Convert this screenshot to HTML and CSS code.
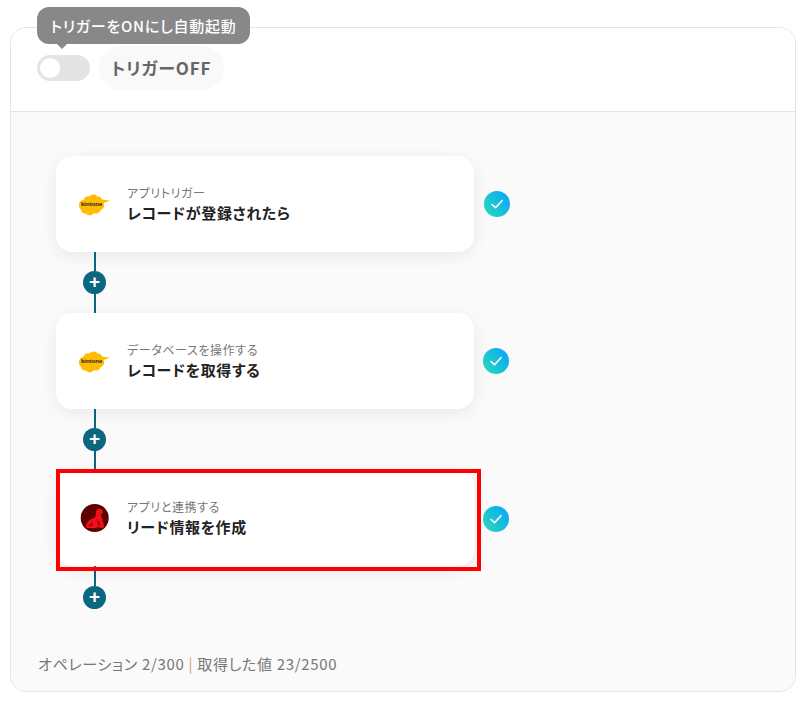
FILE: index.html
```html
<!DOCTYPE html>
<html lang="ja">
<head>
<meta charset="utf-8">
<title>フロー</title>
<link rel="stylesheet" href="styles.css">
</head>
<body>
<div class="tooltip">トリガーをONにし自動起動</div>
<main class="panel">
  <header class="panel-head">
    <span class="toggle"><span class="knob"></span></span>
    <span class="status">トリガーOFF</span>
  </header>
  <section class="panel-body">
    <div class="flow">
      <div class="step">
        <div class="card">
          <svg class="logo" viewBox="0 0 32 24" width="32" height="24">
            <path class="cloud" d="M1 13C1 10 3 8 5.500 8C6 5 9 3.500 11.500 4.500C13 2 17.500 1.500 19.500 4.500C21.500 4 24 5.500 24 7.500L32 8.700L25.500 11C27 14 25.500 17.500 22.500 18C22 21 18.500 22.500 16 21C14 24 9.500 24 8 21.500C5.500 22 3 20 3 17.500C1.500 16.500 1 15 1 13Z"/>
            <text class="logo-text" x="13.700" y="13.800">kintone</text>
          </svg>
          <div class="card-text">
            <div class="eyebrow">アプリトリガー</div>
            <div class="title">レコードが登録されたら</div>
          </div>
        </div>
        <svg class="check" viewBox="0 0 26 26" width="26" height="26">
          <defs><linearGradient id="g1" x1="0" y1="1" x2="1" y2="0.300"><stop offset="0" stop-color="#2bdcb4"/><stop offset="1" stop-color="#0aaaf5"/></linearGradient></defs>
          <circle cx="13" cy="13" r="13" fill="url(#g1)"/>
          <path class="tick" d="M8 13.500L11.500 16.700L18 9.700"/>
        </svg>
      </div>
      <div class="link"><span class="line"></span><span class="plus">+</span><span class="line"></span></div>

      <div class="step step-tight">
        <div class="card">
          <svg class="logo" viewBox="0 0 32 24" width="32" height="24">
            <path class="cloud" d="M1 13C1 10 3 8 5.500 8C6 5 9 3.500 11.500 4.500C13 2 17.500 1.500 19.500 4.500C21.500 4 24 5.500 24 7.500L32 8.700L25.500 11C27 14 25.500 17.500 22.500 18C22 21 18.500 22.500 16 21C14 24 9.500 24 8 21.500C5.500 22 3 20 3 17.500C1.500 16.500 1 15 1 13Z"/>
            <text class="logo-text" x="13.700" y="13.800">kintone</text>
          </svg>
          <div class="card-text">
            <div class="eyebrow">データベースを操作する</div>
            <div class="title">レコードを取得する</div>
          </div>
        </div>
        <svg class="check" viewBox="0 0 26 26" width="26" height="26">
          <circle cx="13" cy="13" r="13" fill="url(#g1)"/>
          <path class="tick" d="M8 13.500L11.500 16.700L18 9.700"/>
        </svg>
      </div>
      <div class="link"><span class="line"></span><span class="plus">+</span><span class="line"></span></div>

      <div class="step step-tight">
        <div class="card">
          <svg class="logo" viewBox="0 0 32 32" width="32" height="32">
            <circle cx="16.700" cy="16" r="14" fill="#5c0000"/>
            <path class="dog" d="M18.500 8L21 6.500L24 7.500L25 11L23 12L23.500 15C25 18 26 22 26 25.500L22 26L20 25L18 26L9 26C7.500 24.500 8 21.500 10 19.500C12 17 15 16.500 17 15.500C18 13 17.500 10 18.500 8Z"/>
            <path class="dog-shade" d="M19 17L22 21L21.500 24.500L20 23L19.500 20ZM10 24L15 20L14 24.500Z"/>
          </svg>
          <div class="card-text">
            <div class="eyebrow">アプリと連携する</div>
            <div class="title">リード情報を作成</div>
          </div>
        </div>
        <svg class="check check-low" viewBox="0 0 26 26" width="26" height="26">
          <circle cx="13" cy="13" r="13" fill="url(#g1)"/>
          <path class="tick" d="M8 13.500L11.500 16.700L18 9.700"/>
        </svg>
        <div class="highlight"></div>
      </div>
      <div class="link link-end"><span class="line"></span><span class="plus">+</span></div>
    </div>
    <footer class="usage">オペレーション 2/300 <span class="sep">|</span> 取得した値 23/2500</footer>
  </section>
</main>
</body>
</html>
```
FILE: styles.css
```css
* { box-sizing: border-box; }
html, body { margin: 0; background: #fff; }
body {
  position: relative;
  width: 805px;
  height: 701px;
  padding: 27px 9px 9px 10px;
  font-family: "Noto Sans CJK JP", "Noto Sans", sans-serif;
  font-feature-settings: "palt";
  overflow: hidden;
}
.panel {
  height: 665px;
  border: 1px solid #e4e4e4;
  border-radius: 16px;
  overflow: hidden;
  display: flex;
  flex-direction: column;
}
.panel-head {
  height: 84px;
  flex: none;
  border-bottom: 1px solid #e4e4e4;
  background: #fff;
  display: flex;
  align-items: flex-start;
  gap: 9px;
  padding: 18px 0 0 26px;
}
.toggle {
  width: 53px;
  height: 26px;
  margin-top: 9px;
  border-radius: 13px;
  background: #e4e4e4;
  padding: 3px;
}
.knob {
  display: block;
  width: 20px;
  height: 20px;
  border-radius: 50%;
  background: #fff;
}
.status {
  height: 44px;
  padding: 0 13px 0 12px;
  border-radius: 22px;
  background: #f9f9f9;
  color: #666;
  font-size: 17px;
  font-weight: 700;
  letter-spacing: .05em;
  line-height: 43px;
}
.tooltip {
  position: absolute;
  left: 37px;
  top: 7px;
  width: 213px;
  height: 37px;
  border-radius: 12px;
  background: #888;
  color: #fff;
  font-size: 15px;
  font-weight: 500;
  letter-spacing: .05em;
  line-height: 37px;
  text-align: center;
  z-index: 2;
}
.tooltip::after {
  content: "";
  position: absolute;
  left: 20px;
  top: 37px;
  border: 5px solid transparent;
  border-top-color: #888;
  border-bottom: 0;
}
.panel-body {
  flex: 1;
  background: #fafafa;
  padding: 44px 0 0 45px;
  display: flex;
  flex-direction: column;
}
.flow { display: flex; flex-direction: column; }
.step {
  position: relative;
  display: flex;
  align-items: center;
  gap: 10px;
}
.step-tight { gap: 9px; }
.card {
  width: 418px;
  height: 96px;
  border-radius: 16px;
  background: #fff;
  box-shadow: 0 4px 16px rgba(0, 0, 0, .07);
  display: flex;
  align-items: center;
  padding-left: 22px;
}
.logo { flex: none; }
.card-text {
  margin-left: 17px;
  margin-top: 1px;
}
.eyebrow {
  color: #777;
  font-size: 12px;
  letter-spacing: .05em;
  line-height: 17px;
}
.title {
  color: #222;
  font-size: 15px;
  font-weight: 700;
  letter-spacing: .04em;
  line-height: 24px;
}
.cloud { fill: #ffbc03; }
.logo-text {
  font-family: "Liberation Sans", sans-serif;
  font-size: 6px;
  font-weight: 700;
  fill: #222;
  text-anchor: middle;
}
.dog { fill: #f0101a; }
.dog-shade { fill: #9c0008; }
.check { flex: none; }
.check-low { margin-top: 1px; }
.tick {
  fill: none;
  stroke: #fff;
  stroke-width: 1.600;
  stroke-linecap: round;
  stroke-linejoin: round;
}
.highlight {
  position: absolute;
  left: 0;
  top: -1px;
  width: 425px;
  height: 102px;
  border: 4px solid #f00;
  pointer-events: none;
}
.link {
  width: 78px;
  height: 61px;
  display: flex;
  flex-direction: column;
  align-items: center;
  padding-right: 1px;
}
.link-end { height: 43px; }
.line {
  width: 2px;
  flex: 1;
  background: #0b667f;
}
.link-end .line { flex: none; height: 20px; }
.plus {
  flex: none;
  width: 23px;
  height: 23px;
  border-radius: 50%;
  background: #0b667f;
  color: #fff;
  font-family: "Liberation Sans", sans-serif;
  font-size: 19px;
  font-weight: 700;
  line-height: 22px;
  text-align: center;
}
.usage {
  margin-top: auto;
  margin-left: -18px;
  margin-bottom: 15px;
  color: #777;
  font-size: 15px;
  letter-spacing: .045em;
  line-height: 24px;
}
.sep { color: #e0a060; }
```
